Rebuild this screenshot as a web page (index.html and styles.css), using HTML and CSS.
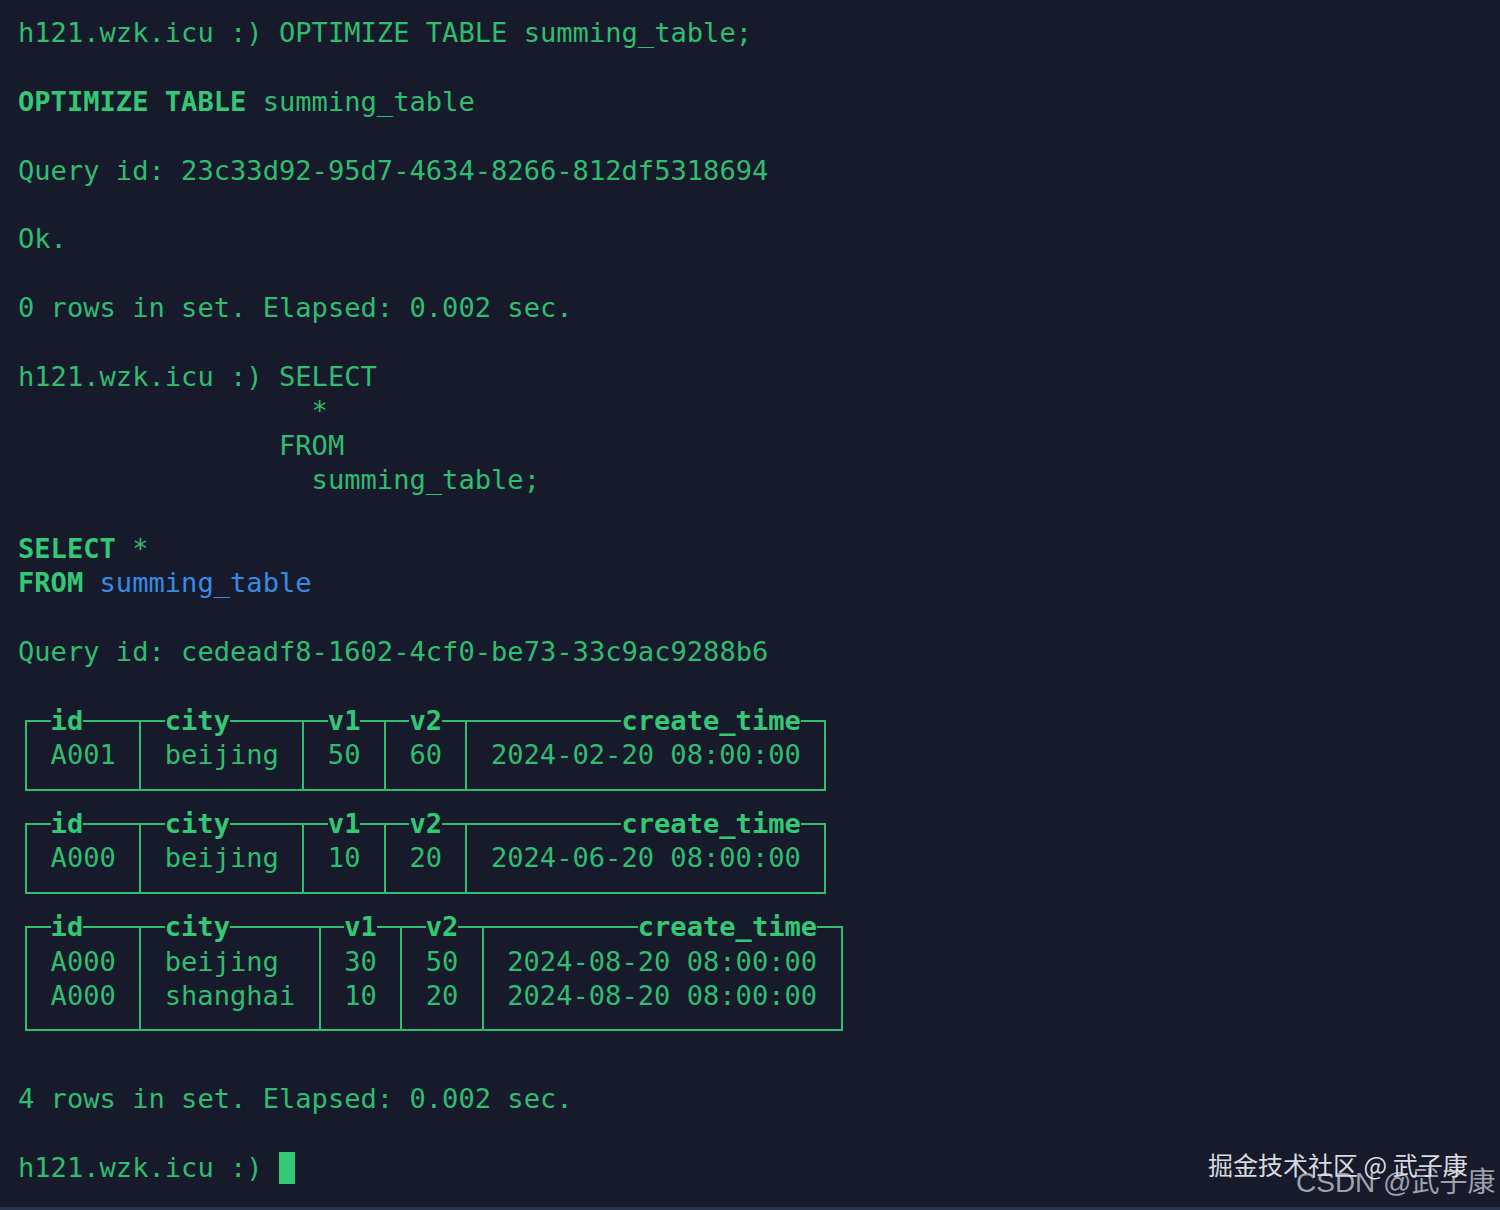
FILE: index.html
```html
<!DOCTYPE html>
<html lang="zh">
<head>
<meta charset="utf-8">
<title>clickhouse-client</title>
<link rel="stylesheet" href="styles.css">
</head>
<body>
<div class="term">
  <div class="line">h121.wzk.icu :) OPTIMIZE TABLE summing_table;</div>
  <div class="line"></div>
  <div class="line"><b>OPTIMIZE TABLE</b> summing_table</div>
  <div class="line"></div>
  <div class="line">Query id: 23c33d92-95d7-4634-8266-812df5318694</div>
  <div class="line"></div>
  <div class="line">Ok.</div>
  <div class="line"></div>
  <div class="line">0 rows in set. Elapsed: 0.002 sec.</div>
  <div class="line"></div>
  <div class="line">h121.wzk.icu :) SELECT</div>
  <div class="line">                  *</div>
  <div class="line">                FROM</div>
  <div class="line">                  summing_table;</div>
  <div class="line"></div>
  <div class="line"><b>SELECT</b> *</div>
  <div class="line"><b>FROM</b> <span class="ident">summing_table</span></div>
  <div class="line"></div>
  <div class="line">Query id: cedeadf8-1602-4cf0-be73-33c9ac9288b6</div>
  <div class="line"></div>

  <div class="tbl">
    <div class="col"><div class="lbl"><span>id</span></div><div class="cell">A001</div></div>
    <div class="col"><div class="lbl"><span>city</span></div><div class="cell">beijing</div></div>
    <div class="col"><div class="lbl"><span>v1</span></div><div class="cell">50</div></div>
    <div class="col"><div class="lbl"><span>v2</span></div><div class="cell">60</div></div>
    <div class="col"><div class="lbl right"><span>create_time</span></div><div class="cell">2024-02-20 08:00:00</div></div>
  </div>

  <div class="tbl">
    <div class="col"><div class="lbl"><span>id</span></div><div class="cell">A000</div></div>
    <div class="col"><div class="lbl"><span>city</span></div><div class="cell">beijing</div></div>
    <div class="col"><div class="lbl"><span>v1</span></div><div class="cell">10</div></div>
    <div class="col"><div class="lbl"><span>v2</span></div><div class="cell">20</div></div>
    <div class="col"><div class="lbl right"><span>create_time</span></div><div class="cell">2024-06-20 08:00:00</div></div>
  </div>

  <div class="tbl">
    <div class="col"><div class="lbl"><span>id</span></div><div class="cell">A000</div><div class="cell">A000</div></div>
    <div class="col"><div class="lbl"><span>city</span></div><div class="cell">beijing</div><div class="cell">shanghai</div></div>
    <div class="col"><div class="lbl"><span>v1</span></div><div class="cell">30</div><div class="cell">10</div></div>
    <div class="col"><div class="lbl"><span>v2</span></div><div class="cell">50</div><div class="cell">20</div></div>
    <div class="col"><div class="lbl right"><span>create_time</span></div><div class="cell">2024-08-20 08:00:00</div><div class="cell">2024-08-20 08:00:00</div></div>
  </div>

  <div class="line"></div>
  <div class="line">4 rows in set. Elapsed: 0.002 sec.</div>
  <div class="line"></div>
  <div class="line">h121.wzk.icu :) <span class="cursor"></span></div>
</div>
<div class="wm wm-juejin">掘金技术社区 @ 武子康</div>
<div class="wm wm-csdn">CSDN @武子康</div>
<div class="edge"></div>
</body>
</html>
```

FILE: styles.css
```css
:root {
  --bg: #161a2b;
  --green: #2fbd70;
  --green-b: #33c875;
  --blue: #3a8ae3;
  --lh: 34.4px;
}

html, body {
  margin: 0;
  padding: 0;
  background: var(--bg);
}

body {
  width: 1500px;
  height: 1210px;
  overflow: hidden;
  position: relative;
}

.term {
  display: flex;
  flex-direction: column;
  align-items: flex-start;
  padding: 16px 0 0 18px;
  font-family: "DejaVu Sans Mono", "Liberation Mono", monospace;
  font-size: 27.1px;
  line-height: var(--lh);
  color: var(--green);
}

.line {
  height: var(--lh);
  white-space: pre;
}

.line b {
  font-weight: bold;
  color: var(--green-b);
}

.ident {
  color: var(--blue);
}

.cursor {
  display: inline-block;
  width: 16px;
  height: 32px;
  vertical-align: -7px;
  background: var(--green-b);
}

/* result tables drawn with borders */
.tbl {
  display: flex;
  margin: calc(var(--lh) / 2 - 1px) 0 calc(var(--lh) / 2 - 1px) calc(0.5ch - 1px);
  border: 2px solid var(--green);
}

.col {
  display: flex;
  flex-direction: column;
  padding: 0 calc(1.5ch - 1px) calc(var(--lh) / 2 - 1px);
  white-space: pre;
}

.col + .col {
  border-left: 2px solid var(--green);
}

.lbl {
  height: var(--lh);
  margin-top: calc(var(--lh) / -2 - 1px);
  font-weight: bold;
  color: var(--green-b);
}

.lbl.right {
  text-align: right;
}

.lbl span {
  background: var(--bg);
}

.cell {
  height: var(--lh);
}

.col:nth-child(n+3) .cell {
  text-align: right;
}

/* watermarks */
.wm {
  position: absolute;
  font-family: "Noto Sans CJK SC", "Liberation Sans", sans-serif;
  white-space: nowrap;
}

.wm-juejin {
  left: 1208px;
  top: 1146px;
  font-size: 25px;
  line-height: 36px;
  color: rgba(236, 238, 242, 0.92);
}

.wm-csdn {
  left: 1296px;
  top: 1164px;
  font-family: "Liberation Sans", "Noto Sans CJK SC", sans-serif;
  font-size: 28px;
  line-height: 38px;
  color: rgba(220, 222, 228, 0.7);
}

.edge {
  position: absolute;
  left: 0;
  right: 0;
  bottom: 0;
  height: 3px;
  background: #27344a;
}
```
